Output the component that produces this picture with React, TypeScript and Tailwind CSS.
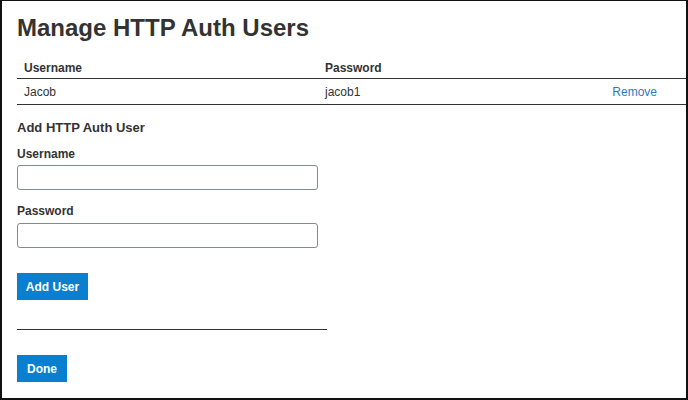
import React from 'react';

interface AuthUser {
  username: string;
  password: string;
}

export default function App() {
  const users: AuthUser[] = [{ username: 'Jacob', password: 'jacob1' }];

  return (
    <div className="w-[688px] h-[400px] bg-white border-t border-l-2 border-r-2 border-b-2 border-[#111] overflow-hidden font-['Liberation_Sans',Arial,sans-serif] text-[#333]">
      <div className="pl-[15px] pt-[12px]">
        <h1 className="text-[24px] leading-[30px] font-bold">Manage HTTP Auth Users</h1>

        {/* Users table */}
        <div className="mt-[14px] w-[670px] text-[12px]">
          <div className="flex h-[22px] items-center border-b border-[#333] font-bold">
            <div className="w-[308px] pl-[7px]">Username</div>
            <div className="flex-1">Password</div>
          </div>
          {users.map((u) => (
            <div key={u.username} className="flex h-[26px] items-center border-b border-[#333]">
              <div className="w-[308px] pl-[7px]">{u.username}</div>
              <div className="flex-1">{u.password}</div>
              <button className="mr-[30px] text-[#2a7bc4]">Remove</button>
            </div>
          ))}
        </div>

        {/* Add user form */}
        <h2 className="mt-[15px] text-[13px] leading-[16px] font-bold">Add HTTP Auth User</h2>
        <label className="block mt-[11px] text-[12px] leading-[15px] font-bold">Username</label>
        <input type="text" className="block mt-[3px] w-[301px] h-[25px] border border-[#7d8b99] rounded-[3px] px-1 text-[12px]" />
        <label className="block mt-[14px] text-[12px] leading-[15px] font-bold">Password</label>
        <input type="password" className="block mt-[4px] w-[301px] h-[25px] border border-[#7d8b99] rounded-[3px] px-1 text-[12px]" />

        <button className="block mt-[25px] h-[27px] w-[71px] bg-[#0a7fcf] text-white text-[12px] font-bold">Add User</button>

        <div className="mt-[29px] w-[310px] h-px bg-[#333]" />

        <button className="block mt-[25px] h-[27px] w-[50px] bg-[#0a7fcf] text-white text-[12px] font-bold">Done</button>
      </div>
    </div>
  );
}
